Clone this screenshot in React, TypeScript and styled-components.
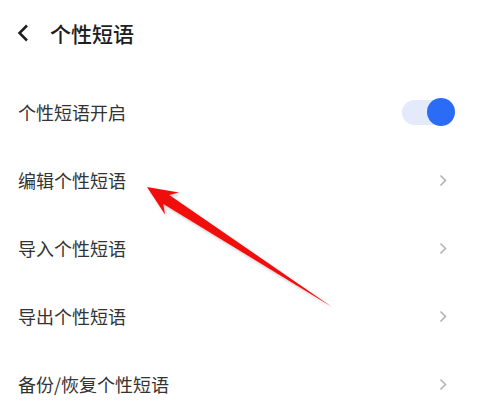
import styled, { createGlobalStyle } from 'styled-components';

const GlobalStyle = createGlobalStyle`
  html, body {
    margin: 0;
    padding: 0;
    background: #ffffff;
  }
  body {
    font-family: "Noto Sans CJK SC", "Noto Sans", sans-serif;
  }
`;

const Page = styled.div`
  position: relative;
  width: 477px;
  height: 406px;
  overflow: hidden;
  background: #ffffff;
`;

const Header = styled.header`
  height: 66px;
  display: flex;
  align-items: center;
  padding-left: 17px;
  box-sizing: border-box;
`;

const BackBtn = styled.div`
  width: 14px;
  height: 18px;
  display: flex;
  align-items: center;
  margin-right: 19px;
`;

const Title = styled.h1`
  margin: 0;
  font-size: 21px;
  font-weight: 500;
  color: #1e1e1e;
  line-height: 1;
`;

const List = styled.div`
  padding-top: 12px;
  display: flex;
  flex-direction: column;
`;

const Row = styled.div`
  height: 68px;
  display: flex;
  align-items: center;
  justify-content: space-between;
  padding: 0 22px 0 18px;
`;

const Label = styled.span`
  font-size: 18px;
  color: #333;
  line-height: 1;
`;

const Trail = styled.div`
  width: 54px;
  display: flex;
  justify-content: flex-end;
  align-items: center;
`;

const Chevron = styled.div`
  margin-right: 8px;
  display: flex;
`;

const Switch = styled.div<{ on: boolean }>`
  position: relative;
  width: 53px;
  height: 28px;
  display: flex;
  align-items: center;

  &::before {
    content: '';
    width: 48px;
    height: 25px;
    border-radius: 13px;
    background: ${(p) => (p.on ? '#e2eafb' : '#e6e6e6')};
  }
`;

const Knob = styled.span`
  position: absolute;
  right: 0;
  top: 0;
  width: 28px;
  height: 28px;
  border-radius: 50%;
  background: #2b6cf6;
`;

const Overlay = styled.svg`
  position: absolute;
  left: 0;
  top: 0;
  pointer-events: none;
`;

const items = [
  { label: '个性短语开启', toggle: true },
  { label: '编辑个性短语' },
  { label: '导入个性短语' },
  { label: '导出个性短语' },
  { label: '备份/恢复个性短语' },
];

export default function App() {
  return (
    <>
      <GlobalStyle />
      <Page>
        <Header>
          <BackBtn>
            <svg width="13" height="18" viewBox="0 0 13 18">
              <path d="M10 1.5 L2.5 9 L10 16.5" fill="none" stroke="#1e1e1e" strokeWidth="2.5" />
            </svg>
          </BackBtn>
          <Title>个性短语</Title>
        </Header>

        <List>
          {items.map((item) => (
            <Row key={item.label}>
              <Label>{item.label}</Label>
              <Trail>
                {item.toggle ? (
                  <Switch on>
                    <Knob />
                  </Switch>
                ) : (
                  <Chevron>
                    <svg width="8" height="13" viewBox="0 0 8 13">
                      <path d="M1.5 1.5 L6.5 6.5 L1.5 11.5" fill="none" stroke="#b3b3b3" strokeWidth="1.6" />
                    </svg>
                  </Chevron>
                )}
              </Trail>
            </Row>
          ))}
        </List>

        {/* 红色箭头标注 */}
        <Overlay width="477" height="406" viewBox="0 0 477 406">
          <defs>
            <filter id="arrowShadow" x="-20%" y="-20%" width="140%" height="140%">
              <feDropShadow dx="1.5" dy="2" stdDeviation="1.5" floodColor="#000" floodOpacity="0.22" />
            </filter>
          </defs>
          <polygon
            points="147,187 179,192.5 169.3,194.9 332,307 163.3,204.1 165,214.5"
            fill="#f20f0f"
            filter="url(#arrowShadow)"
          />
        </Overlay>
      </Page>
    </>
  );
}
